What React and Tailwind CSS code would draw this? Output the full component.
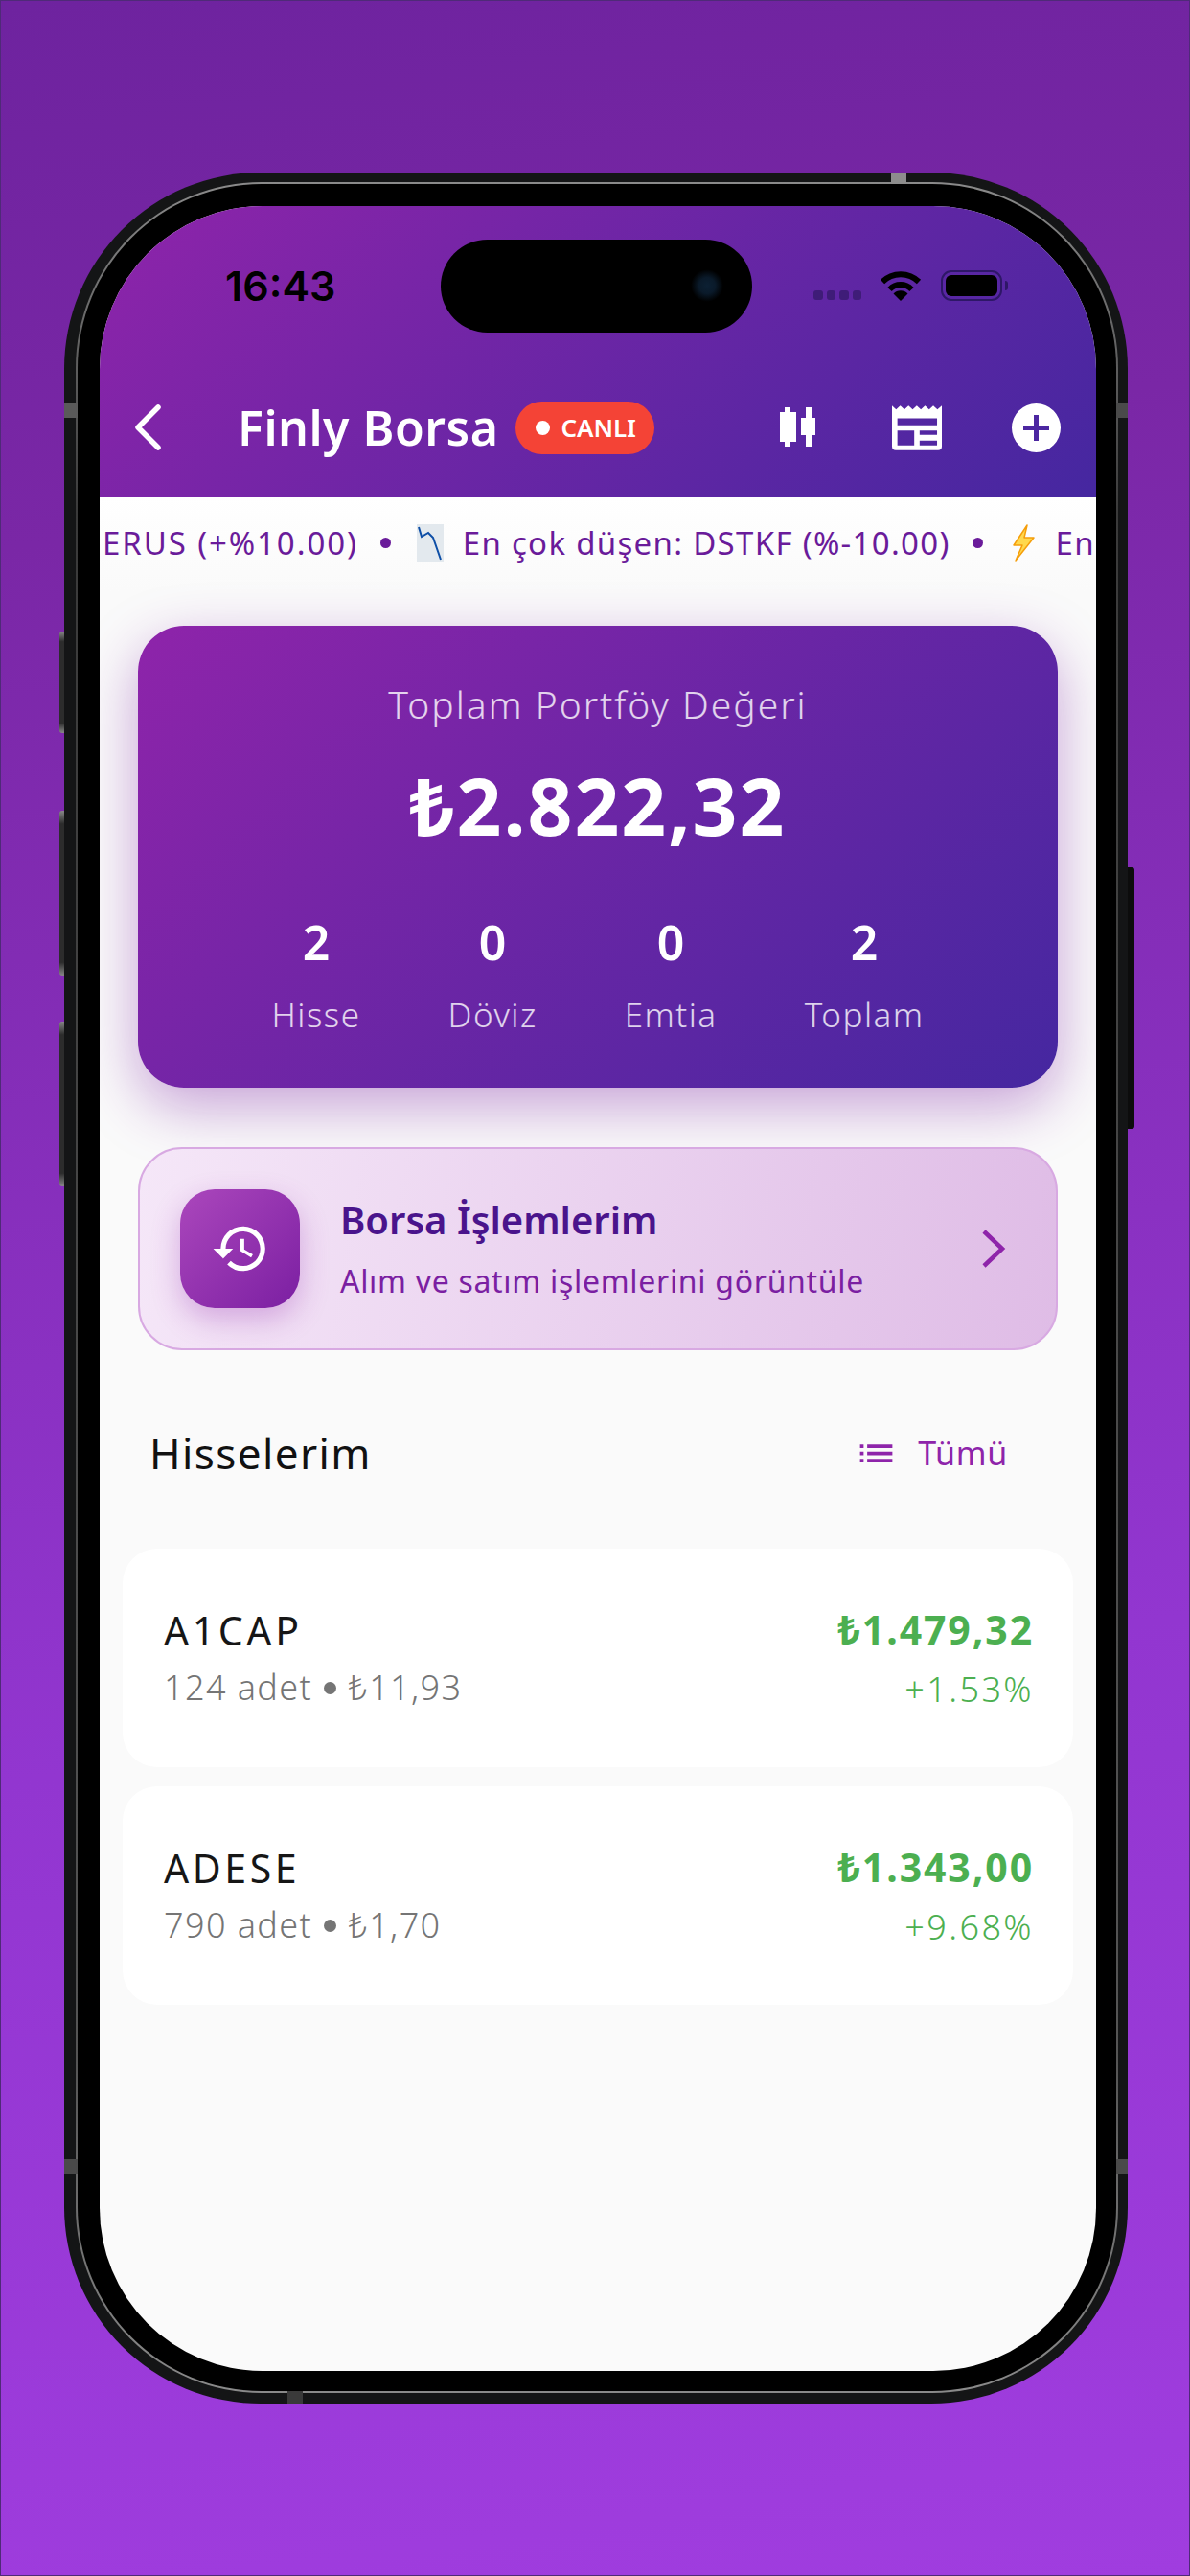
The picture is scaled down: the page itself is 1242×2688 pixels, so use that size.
import React from 'react';
import { MdHistory, MdList } from 'react-icons/md';

const FONT = "font-['Noto_Sans',sans-serif]";

function CandleIcon() {
  return (
    <svg width="37" height="42" viewBox="0 0 37 42" fill="#fff">
      <rect x="5" y="0" width="6" height="41" />
      <rect x="0" y="5" width="17" height="31" />
      <rect x="27" y="0" width="6" height="41" />
      <rect x="22" y="11" width="15" height="18" />
    </svg>
  );
}

function NewsIcon() {
  return (
    <svg width="52" height="47" viewBox="0 0 157 140">
      <path
        fill="#fff"
        fillRule="evenodd"
        d="M0 0 L13 12 L26 0 L39 12 L52 0 L65 12 L78 0 L91 12 L104 0 L117 12 L130 0 L143 12 L157 0 L157 128 Q157 140 145 140 L12 140 Q0 140 0 128 Z M17 40 L17 62 L142 62 L142 40 Z M17 78 L17 125 L70 125 L70 78 Z M87 78 L87 92 L142 92 L142 78 Z M87 110 L87 125 L142 125 L142 110 Z"
      />
    </svg>
  );
}

function PlusIcon() {
  return (
    <svg width="51" height="51" viewBox="0 0 51 51">
      <path
        fill="#fff"
        fillRule="evenodd"
        d="M25.5 0 A25.5 25.5 0 1 1 25.5 51 A25.5 25.5 0 1 1 25.5 0 Z M23 12 L23 23 L12 23 L12 28 L23 28 L23 39 L28 39 L28 28 L39 28 L39 23 L28 23 L28 12 Z"
      />
    </svg>
  );
}

function WifiIcon() {
  return (
    <svg width="44" height="32" viewBox="0 0 44 32" fill="none">
      <path d="M3 12 A27 27 0 0 1 41 12" stroke="#000" strokeWidth="6" />
      <path d="M10.5 20 A16 16 0 0 1 33.5 20" stroke="#000" strokeWidth="6" />
      <path d="M22 32 L14.5 24.5 A10.5 10.5 0 0 1 29.5 24.5 Z" fill="#000" />
    </svg>
  );
}

function ChartDownEmoji() {
  return (
    <svg width="28" height="39" viewBox="0 0 28 39">
      <rect width="28" height="39" fill="#e3e9ee" />
      <path d="M2 3 L5 13 L12 9 L17 14 L25 37" fill="none" stroke="#0d4ea6" strokeWidth="2" />
    </svg>
  );
}

function BoltEmoji() {
  return (
    <svg width="24" height="39" viewBox="0 0 24 39">
      <path d="M16 1 L2 22 L11 22 L4 38 L23 14 L13 14 Z" fill="#ffd84d" stroke="#f59e0b" strokeWidth="1.5" strokeLinejoin="round" />
    </svg>
  );
}

function StatusBar() {
  return (
    <div className="h-[166px] pl-[131px] pr-[92px] flex items-center justify-between">
      <span className="font-['Inter',sans-serif] text-[43px] leading-none font-semibold text-black">16:43</span>
      <div className="flex items-center">
        <div className="flex gap-[4px] mt-[19px] mr-[19px]">
          {[0, 1, 2, 3].map((i) => (
            <div key={i} className="w-[9.5px] h-[10px] rounded-[3px] bg-[#3f1c78]" />
          ))}
        </div>
        <WifiIcon />
        <div className="ml-[20px] w-[64px] h-[32px] p-[3px] border-[2.5px] border-[#2e1767] rounded-[11px]">
          <div className="w-full h-full rounded-[6px] bg-black" />
        </div>
        <div className="ml-[3px] w-[3px] h-[10px] rounded-r-full bg-[#2e1767]" />
      </div>
    </div>
  );
}

function NavBar() {
  return (
    <div className="h-[130px] pl-[37px] pr-[37px] flex items-center">
      <svg width="30" height="48" viewBox="0 0 30 48" fill="none" className="-ml-[2px]">
        <path d="M26 3 L5 24 L26 45" stroke="#fff" strokeWidth="5.5" strokeLinecap="round" strokeLinejoin="round" />
      </svg>
      <span className="ml-[79px] text-[50px] leading-none font-semibold tracking-[0.5px] text-white">Finly Borsa</span>
      <div className="ml-[18px] w-[145px] h-[55px] rounded-full bg-[#f44336] flex items-center pl-[21px]">
        <div className="w-[15px] h-[15px] rounded-full bg-white" />
        <span className="ml-[11px] text-[26px] leading-none font-semibold text-white">CANLI</span>
      </div>
      <div className="ml-auto flex items-center">
        <CandleIcon />
        <div className="ml-[80px]"><NewsIcon /></div>
        <div className="ml-[73px]"><PlusIcon /></div>
      </div>
    </div>
  );
}

function Ticker() {
  return (
    <div className="h-[98px] pl-[3px] pb-[3px] flex items-center overflow-hidden whitespace-nowrap text-[33px] leading-none text-[#6a1b9a] bg-[linear-gradient(#ffffff,#fafafa)]">
      <span className="tracking-[1.9px]">ERUS (+%10.00)</span>
      <div className="ml-[23px] w-[11px] h-[11px] shrink-0 rounded-full bg-[#6a1b9a]" />
      <div className="ml-[27px] shrink-0"><ChartDownEmoji /></div>
      <span className="ml-[20px] tracking-[1.3px]">En çok düşen: DSTKF (%-10.00)</span>
      <div className="ml-[23px] w-[11px] h-[11px] shrink-0 rounded-full bg-[#6a1b9a]" />
      <div className="ml-[30px] shrink-0"><BoltEmoji /></div>
      <span className="ml-[22px] tracking-[1.3px]">En</span>
    </div>
  );
}

function Stat({ value, label }) {
  return (
    <div className="flex flex-col items-center">
      <span className="text-[50px] leading-none font-semibold text-white">{value}</span>
      <span className="mt-[33px] text-[35px] leading-none font-light tracking-[1.5px] text-white/80">{label}</span>
    </div>
  );
}

function PortfolioCard() {
  return (
    <div className="mx-[40px] h-[482px] pt-[62px] rounded-[48px] flex flex-col items-center bg-[linear-gradient(135deg,#8e24aa,#4527a0)] shadow-[0_20px_60px_rgba(123,31,162,0.4)]">
      <span className="text-[39px] leading-none font-light tracking-[2px] text-white/80">Toplam Portföy Değeri</span>
      <span className="mt-[45px] text-[82px] leading-none font-bold tracking-[2px] text-white">₺2.822,32</span>
      <div className="mt-[77px] flex justify-center gap-[91px]">
        <Stat value="2" label="Hisse" />
        <Stat value="0" label="Döviz" />
        <Stat value="0" label="Emtia" />
        <Stat value="2" label="Toplam" />
      </div>
    </div>
  );
}

function TradesCard() {
  return (
    <div className="mx-[40px] mt-[62px] h-[212px] pl-[42px] pr-[52px] rounded-[46px] border-2 border-[#d8a9e2] flex items-center bg-[linear-gradient(100deg,#f5e7f8,#dfbce6)]">
      <div className="w-[125px] h-[124px] rounded-[36px] flex items-center justify-center bg-[linear-gradient(135deg,#ab47bc,#7b1fa2)] shadow-[0_12px_30px_rgba(142,36,170,0.3)]">
        <MdHistory size={62} color="#fff" />
      </div>
      <div className="ml-[42px] flex flex-col">
        <span className="text-[40px] leading-none font-semibold text-[#4a148c]">Borsa İşlemlerim</span>
        <span className="mt-[28px] text-[32px] leading-none tracking-[0.7px] text-[#7b1fa2]">Alım ve satım işlemlerini görüntüle</span>
      </div>
      <svg width="26" height="40" viewBox="0 0 26 40" fill="none" className="ml-auto">
        <path d="M3 2 L22 20 L3 38" stroke="#8e24aa" strokeWidth="4.5" />
      </svg>
    </div>
  );
}

function StockCard({ name, qty, price, value, change }) {
  return (
    <div className="h-[228px] pl-[43px] pr-[41px] rounded-[36px] bg-white flex items-center justify-between">
      <div className="flex flex-col">
        <span className="text-[41px] leading-none tracking-[3.6px] text-[#161616]">{name}</span>
        <div className="mt-[21px] flex items-center text-[36px] leading-none font-light tracking-[1.4px] text-[#757575]">
          <span>{qty}</span>
          <div className="mx-[12px] w-[13px] h-[13px] rounded-full bg-[#757575]" />
          <span>{price}</span>
        </div>
      </div>
      <div className="flex flex-col items-end">
        <span className="text-[41px] leading-none font-bold tracking-[1.9px] text-[#4caf50]">{value}</span>
        <span className="mt-[24px] text-[36px] leading-none font-light tracking-[2.4px] text-[#4caf50]">{change}</span>
      </div>
    </div>
  );
}

function Holdings() {
  return (
    <>
      <div className="mt-[57px] h-[100px] pl-[52px] pr-[92px] flex items-center justify-between">
        <span className="text-[44px] leading-none tracking-[1.4px] text-[#111]">Hisselerim</span>
        <div className="flex items-center text-[#8e24aa]">
          <MdList size={45} />
          <span className="ml-[21px] text-[34px] leading-none tracking-[0.7px]">Tümü</span>
        </div>
      </div>
      <div className="mt-[50px] mx-[24px] flex flex-col gap-[20px]">
        <StockCard name="A1CAP" qty="124 adet" price="₺11,93" value="₺1.479,32" change="+1.53%" />
        <StockCard name="ADESE" qty="790 adet" price="₺1,70" value="₺1.343,00" change="+9.68%" />
      </div>
    </>
  );
}

export default function App() {
  return (
    <div className={`${FONT} w-[1242px] h-[2688px] overflow-hidden border border-[#4f2a78] pt-[179px] pl-[66px] bg-[linear-gradient(172deg,#6e239f_0%,#7a27a6_20%,#9236d0_65%,#a03ddf_100%)]`}>
      <div className="relative w-[1110px] h-[2328px]">
        {/* side buttons */}
        <div className="absolute left-[-5px] top-[479px] w-[6px] h-[106px] rounded-l-[3px] bg-[linear-gradient(180deg,#888_0%,#2c2c2c_10%,#2c2c2c_90%,#888_100%)]" />
        <div className="absolute left-[-5px] top-[666px] w-[6px] h-[172px] rounded-l-[3px] bg-[linear-gradient(180deg,#888_0%,#2c2c2c_8%,#2c2c2c_92%,#888_100%)]" />
        <div className="absolute left-[-5px] top-[886px] w-[6px] h-[172px] rounded-l-[3px] bg-[linear-gradient(180deg,#888_0%,#2c2c2c_8%,#2c2c2c_92%,#888_100%)]" />
        <div className="absolute right-[-7px] top-[725px] w-[8px] h-[273px] rounded-r-[3px] bg-[#0c0c0c]" />

        <div className="relative w-full h-full pt-[10px] pb-[11px] pl-[12px] pr-[10px] rounded-[205px] bg-[#141516]">
          <div className="h-full p-[2px] rounded-[194px] bg-[linear-gradient(180deg,#8a8a8a_0%,#3a3a3a_15%,#555_85%,#8a8a8a_100%)]">
            <div className="h-full pt-[23px] pb-[21px] pl-[23px] pr-[21px] rounded-[192px] bg-black">
              <div className="relative h-full rounded-[170px] overflow-hidden bg-[#fafafa]">
                <div className="h-[304px] bg-[linear-gradient(135deg,#8e24aa,#4527a0)]">
                  <StatusBar />
                  <NavBar />
                </div>
                <Ticker />
                <div className="mt-[36px]">
                  <PortfolioCard />
                </div>
                <TradesCard />
                <Holdings />

                {/* dynamic island */}
                <div className="absolute left-[356px] top-[35px] w-[325px] h-[97px] rounded-full bg-black">
                  <div className="absolute left-[261px] top-[31px] w-[34px] h-[34px] rounded-full bg-[radial-gradient(circle,#0c2033_0%,#0a1a2a_35%,#000_70%)]" />
                </div>
              </div>
            </div>
          </div>
          {/* antenna bands */}
          <div className="absolute left-0 top-[240px] w-[14px] h-[16px] bg-[#5a5a5a]" />
          <div className="absolute right-0 top-[240px] w-[12px] h-[16px] bg-[#4a4a4a]" />
          <div className="absolute left-[863px] top-0 w-[16px] h-[12px] bg-[#8d8d8d]" />
          <div className="absolute left-0 bottom-[239px] w-[14px] h-[16px] bg-[#4a4a4a]" />
          <div className="absolute right-0 bottom-[239px] w-[12px] h-[16px] bg-[#4a4a4a]" />
          <div className="absolute left-[233px] bottom-0 w-[16px] h-[13px] bg-[#3a3a3a]" />
        </div>
      </div>
    </div>
  );
}
